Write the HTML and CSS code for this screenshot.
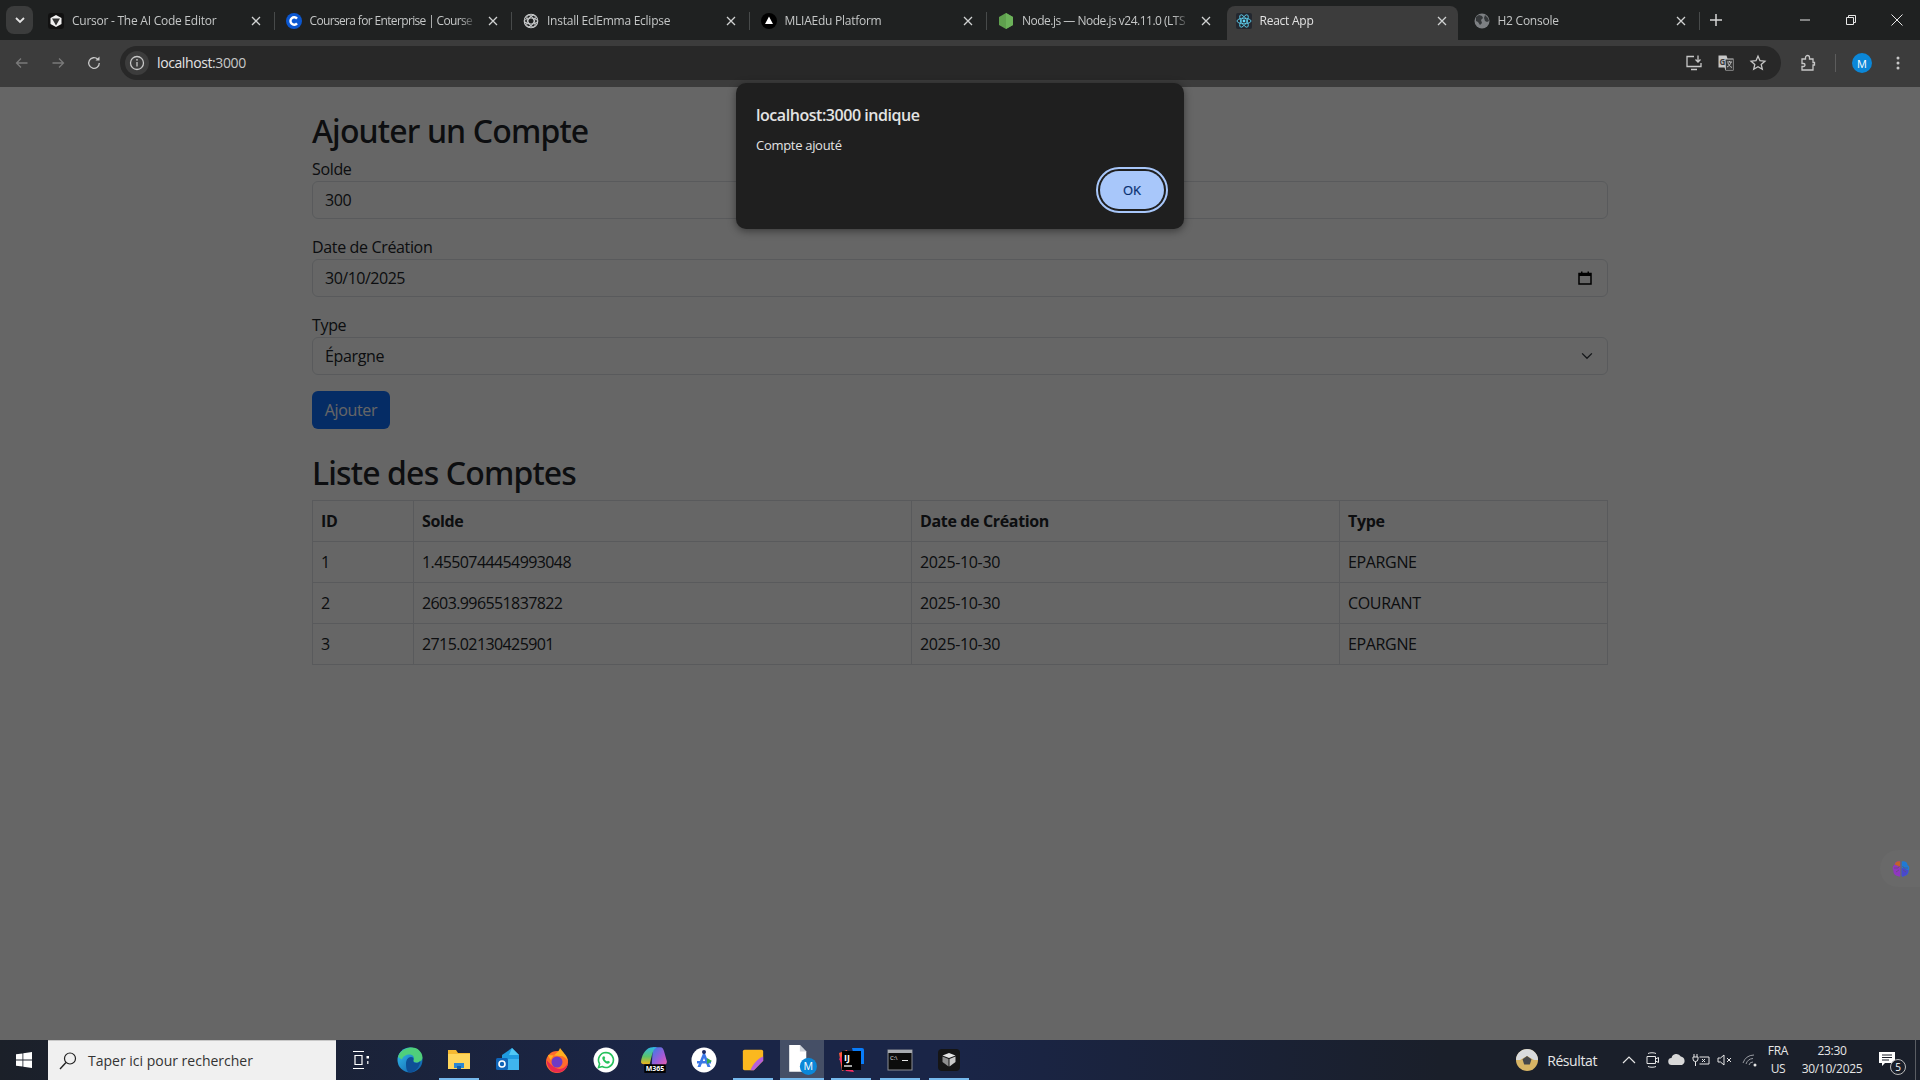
FILE: index.html
```html
<!DOCTYPE html>
<html lang="fr">
<head>
  <meta charset="utf-8">
  <title>React App</title>
  <link rel="stylesheet" href="styles.css">
</head>
<body>
  <div class="tabstrip">
    <div class="tab-search"><svg class="ico12" viewBox="0 0 12 12"><path d="M2 4l4 4 4-4" fill="none" stroke="#e3e3e3" stroke-width="1.8"/></svg></div>
    <div class="tabs">
      <div class="tab">
        <svg class="favicon" viewBox="0 0 16 16"><rect width="16" height="16" rx="3" fill="#111"/><path d="M8 2l5.5 3v6L8 14l-5.5-3V5z" fill="#f2f2f2"/><path d="M4 5.500h8L8 12.500z" fill="#333"/></svg>
        <span class="tab-title">Cursor - The AI Code Editor</span>
        <svg class="tab-close" viewBox="0 0 16 16"><path d="M4 4l8 8M12 4l-8 8"/></svg>
      </div>
      <span class="tab-sep"></span>
      <div class="tab">
        <svg class="favicon" viewBox="0 0 16 16"><circle cx="8" cy="8" r="8" fill="#0b57d0"/><path d="M11 5.600A3.700 3.700 0 1 0 11 10.400" fill="none" stroke="#fff" stroke-width="2.400"/></svg>
        <span class="tab-title tab-title-coursera">Coursera for Enterprise | Course</span>
        <svg class="tab-close" viewBox="0 0 16 16"><path d="M4 4l8 8M12 4l-8 8"/></svg>
      </div>
      <span class="tab-sep"></span>
      <div class="tab">
        <svg class="favicon" viewBox="0 0 16 16"><g fill="none" stroke="#c9cbcc" stroke-width="1.100"><circle cx="8" cy="8" r="6.800"/><ellipse cx="8" cy="8" rx="6.500" ry="3"/><ellipse cx="8" cy="8" rx="6.500" ry="3" transform="rotate(60 8 8)"/><ellipse cx="8" cy="8" rx="6.500" ry="3" transform="rotate(120 8 8)"/></g></svg>
        <span class="tab-title">Install EclEmma Eclipse</span>
        <svg class="tab-close" viewBox="0 0 16 16"><path d="M4 4l8 8M12 4l-8 8"/></svg>
      </div>
      <span class="tab-sep"></span>
      <div class="tab">
        <svg class="favicon" viewBox="0 0 16 16"><circle cx="8" cy="8" r="8" fill="#000"/><path d="M8 3.500l4 7.500H4z" fill="#fff"/></svg>
        <span class="tab-title">MLIAEdu Platform</span>
        <svg class="tab-close" viewBox="0 0 16 16"><path d="M4 4l8 8M12 4l-8 8"/></svg>
      </div>
      <span class="tab-sep"></span>
      <div class="tab">
        <svg class="favicon" viewBox="0 0 16 16"><path d="M8 0l7 4v8l-7 4-7-4V4z" fill="#5fa04e"/><path d="M8 0l7 4v8l-7 4z" fill="#6cb25a"/></svg>
        <span class="tab-title tab-title-node">Node.js — Node.js v24.11.0 (LTS</span>
        <svg class="tab-close" viewBox="0 0 16 16"><path d="M4 4l8 8M12 4l-8 8"/></svg>
      </div>
      <span class="tab-sep tab-sep-off"></span>
      <div class="tab tab-active">
        <svg class="favicon" viewBox="0 0 16 16"><rect width="16" height="16" rx="2" fill="#23272f"/><circle cx="8" cy="8" r="1.400" fill="#61dafb"/><g fill="none" stroke="#61dafb" stroke-width=".8"><ellipse cx="8" cy="8" rx="7" ry="2.800"/><ellipse cx="8" cy="8" rx="7" ry="2.800" transform="rotate(60 8 8)"/><ellipse cx="8" cy="8" rx="7" ry="2.800" transform="rotate(120 8 8)"/></g></svg>
        <span class="tab-title">React App</span>
        <svg class="tab-close" viewBox="0 0 16 16"><path d="M4 4l8 8M12 4l-8 8"/></svg>
      </div>
      <div class="tab tab-last">
        <svg class="favicon" viewBox="0 0 16 16"><circle cx="8" cy="8" r="7.500" fill="#7d8083"/><path d="M2 4l3-2 3 1 1 2-2 2 1 3-2 2-2-3-2-1zM11 2l3 3 1 3-2 1-2-1-1-3z" fill="#35383a"/></svg>
        <span class="tab-title">H2 Console</span>
        <svg class="tab-close" viewBox="0 0 16 16"><path d="M4 4l8 8M12 4l-8 8"/></svg>
      </div>
      <span class="tab-sep"></span>
    </div>
    <div class="new-tab"><svg class="ico16" viewBox="0 0 16 16"><path d="M8 2v12M2 8h12" stroke="#d5d5d5" stroke-width="1.500"/></svg></div>
    <div class="win-controls">
      <div class="win-btn"><svg class="ico12" viewBox="0 0 12 12"><path d="M1 6h10" stroke="#e6e6e6"/></svg></div>
      <div class="win-btn"><svg class="ico12" viewBox="0 0 12 12"><path d="M1.500 3.500h7v7h-7zM3.500 3.500v-2h7v7h-2" fill="none" stroke="#e6e6e6"/></svg></div>
      <div class="win-btn"><svg class="ico12" viewBox="0 0 12 12"><path d="M.5.500l11 11M11.500.500l-11 11" stroke="#e6e6e6"/></svg></div>
    </div>
  </div>

  <div class="toolbar">
    <div class="nav-btn"><svg class="ico16" viewBox="0 0 16 16"><path d="M13.500 8h-11M7 3.500L2.500 8 7 12.500" class="line-dim"/></svg></div>
    <div class="nav-btn"><svg class="ico16" viewBox="0 0 16 16"><path d="M2.500 8h11M9 3.500L13.500 8 9 12.500" class="line-dim"/></svg></div>
    <div class="nav-btn"><svg class="ico16" viewBox="0 0 16 16"><path d="M13.300 8a5.300 5.300 0 1 1-1.600-3.800" class="line"/><path d="M13.500 1.500v4h-4z" fill="#c7c7c7"/></svg></div>
    <div class="omnibox">
      <div class="info-chip"><svg class="ico16" viewBox="0 0 16 16"><circle cx="8" cy="8" r="6.500" class="line"/><path d="M8 7v4.500" class="line"/><circle cx="8" cy="4.800" r=".9" fill="#c7c7c7"/></svg></div>
      <span class="url">localhost<span class="url-port">:3000</span></span>
      <div class="omni-icons">
        <div class="omni-btn"><svg class="ico18" viewBox="0 0 18 18"><path d="M9 2.500H2v10h14V9M6 15.500h6" class="line"/><path d="M13 1.500v6.500M10.500 5.500L13 8l2.500-2.500" class="line"/></svg></div>
        <div class="omni-btn"><svg class="ico18" viewBox="0 0 18 18"><path d="M1.500 1.500h8l1 3h6v12h-8l-1-3h-6z" fill="#c7c7c7"/><path d="M8.500 5.500h7.500v10.500H9" fill="#3a3a3a"/><text x="2.500" y="10.500" class="gt-letter">G</text><path d="M10 8h5M12.500 7v1M14 8c-.5 2.500-2 4-4 5M11 9c.5 2 2 3.500 4 4.500" stroke="#c7c7c7" stroke-width=".9" fill="none"/></svg></div>
        <div class="omni-btn"><svg class="ico18" viewBox="0 0 18 18"><path d="M9 2.200l2 4.500 4.900.5-3.700 3.200 1.100 4.800L9 12.700l-4.300 2.500 1.100-4.800-3.700-3.200 4.900-.5z" class="line"/></svg></div>
      </div>
    </div>
    <div class="tool-btn tool-ext"><svg class="ico18" viewBox="0 0 18 18"><path d="M3 5h3.500V3.500a2 2 0 0 1 4 0V5H14v3.500h1.500v2.500H14v5H3v-3.500h1.500a1.500 1.500 0 0 0 0-3H3z" class="line"/></svg></div>
    <span class="tool-sep"></span>
    <div class="tool-btn tool-avatar"><span class="avatar">M</span></div>
    <div class="tool-btn tool-menu"><svg class="ico16" viewBox="0 0 16 16"><circle cx="8" cy="3" r="1.500" fill="#c7c7c7"/><circle cx="8" cy="8" r="1.500" fill="#c7c7c7"/><circle cx="8" cy="13" r="1.500" fill="#c7c7c7"/></svg></div>
  </div>

  <div class="page">
    <div class="container">
      <h2 class="title-first">Ajouter un Compte</h2>
      <div class="mb-3">
        <div class="form-label">Solde</div>
        <div class="form-control">300</div>
      </div>
      <div class="mb-3">
        <div class="form-label">Date de Création</div>
        <div class="form-control"><span class="date-value">30/10/2025</span>
          <svg class="cal-icon" viewBox="0 0 14 14"><path d="M1 2.500h12v10.500H1z" fill="none" stroke="#000" stroke-width="1.500"/><path d="M1 2h12v3H1zM3 .5h1.500V2H3zM9.500.5H11V2H9.500z"/></svg>
        </div>
      </div>
      <div class="mb-3">
        <div class="form-label">Type</div>
        <div class="form-control">Épargne
          <svg class="sel-icon" viewBox="0 0 16 16"><path d="M1.500 4.500L8 11l6.500-6.500" fill="none" stroke="#343a40" stroke-width="1.800"/></svg>
        </div>
      </div>
      <div class="btn-primary">Ajouter</div>

      <h2 class="title-second">Liste des Comptes</h2>
      <table class="table">
        <thead>
          <tr><th class="col-id">ID</th><th class="col-solde">Solde</th><th class="col-date">Date de Création</th><th>Type</th></tr>
        </thead>
        <tbody>
          <tr><td>1</td><td class="num">1.4550744454993048</td><td>2025-10-30</td><td>EPARGNE</td></tr>
          <tr><td>2</td><td class="num">2603.996551837822</td><td>2025-10-30</td><td>COURANT</td></tr>
          <tr><td>3</td><td class="num">2715.02130425901</td><td>2025-10-30</td><td>EPARGNE</td></tr>
        </tbody>
      </table>
    </div>

    <div class="scrim"></div>

    <div class="side-widget">
      <svg class="brain" viewBox="0 0 20 20">
        <path d="M9.300 2.500C6 1.500 3.500 3.500 3.500 6 1.500 7 1 10 2.500 11.500 2 14.500 4.500 17 7 17c1 1 2.300.8 2.300-.5z" fill="#8f37c0"/>
        <path d="M9 2.500C6.500 1.800 4.500 3 3.800 5.500L9 8z" fill="#c2622a"/>
        <path d="M10.700 2.500C14 1.500 16.500 3.500 16.500 6c2 1 2.500 4 1 5.500.5 3-2 5.500-4.500 5.500-1 1-2.300.8-2.300-.5z" fill="#1f7ad6"/>
        <path d="M10.700 9c2 0 4 1 6.800 2.500-.5 3-2 5.500-4.500 5.500-1 1-2.300.8-2.300-.5z" fill="#4a48cc"/>
        <path d="M3 9h4l1.500-2M5 13l3-2M17 9h-4l-1.500-2M15 13l-3-2" fill="none" stroke="#5c5570" stroke-width=".7"/>
      </svg>
    </div>
  </div>

  <div class="dialog">
    <div class="dialog-title">localhost:3000 indique</div>
    <div class="dialog-msg">Compte ajouté</div>
    <div class="dialog-actions"><div class="dialog-ok">OK</div></div>
  </div>

  <div class="taskbar">
    <div class="start"><svg class="ico16" viewBox="0 0 16 16"><path d="M0 2.300L6.500 1.400v6.200H0zM7.300 1.300L16 0v7.600H7.300zM0 8.400h6.500v6.200L0 13.700zM7.300 8.400H16V16L7.300 14.700z" fill="#fff"/></svg></div>
    <div class="search-box">
      <svg class="ico20" viewBox="0 0 20 20"><circle cx="12" cy="7.500" r="5.500" fill="none" stroke="#222" stroke-width="1.200"/><path d="M8 11.500L2 18" stroke="#222" stroke-width="1.400"/></svg>
      <span class="search-text">Taper ici pour rechercher</span>
    </div>

    <div class="task-slot"><svg class="ico20" viewBox="0 0 20 20"><path d="M2 1.500h11M2 18.500h11M4 5.500h7v9H4z" fill="none" stroke="#fff" stroke-width="1.200"/><path d="M15.500 6h2.500v2.500h-2.500z" fill="#fff"/><path d="M16.800 11v3" stroke="#fff" stroke-width="1.200"/></svg></div>
    <div class="task-slot"><svg class="ico26" viewBox="0 0 26 26">
      <defs><linearGradient id="edgeA" x1="0" y1="0" x2="1" y2="1"><stop offset="0" stop-color="#35c1f1"/><stop offset="1" stop-color="#0b57a4"/></linearGradient></defs>
      <circle cx="13" cy="13" r="12.500" fill="url(#edgeA)"/>
      <path d="M1 10C3 3 10 .5 15 .5c6 0 10.500 5 10.500 10 0 3-3 5-6 5-2 0-3.500-1-3.500-2 2-2 .5-6-3-6-4 0-7.500 2-8 5z" fill="#4fcf7b"/>
      <path d="M9 17c0-4 2-7 5-7 2 0 3 1 2.500 3-1 4 5 4 7 .5C23 20 18 25.500 13 25.500c-3 0-4-4-4-8.500z" fill="#0e4f96"/>
    </svg></div>
    <div class="task-slot task-open"><svg class="ico26" viewBox="0 0 26 26"><path d="M2 3h8l2 3h12v3H2z" fill="#f5b932"/><path d="M2 7h22v15H2z" fill="#ffd65c"/><path d="M8 21v-5h10v5z" fill="#2b87d3"/><path d="M11 22v-3h4v3z" fill="#125ea8"/></svg></div>
    <div class="task-slot"><svg class="ico26" viewBox="0 0 26 26"><path d="M7 8L17 1l7 7v15H7z" fill="#1f9be0"/><path d="M17 1l7 7H14z" fill="#50c8f5"/><path d="M12 12h12v11H12z" fill="#3fb4ee"/><rect x="1" y="11" width="12" height="12" rx="1.500" fill="#0f64b8"/><circle cx="7" cy="17" r="3" fill="none" stroke="#fff" stroke-width="1.600"/></svg></div>
    <div class="task-slot"><svg class="ico26" viewBox="0 0 26 26">
      <circle cx="13" cy="15" r="11" fill="#ff6b2c"/>
      <path d="M4 8c1 3 2 4 3 5 2-6 7-6 9-12 3 4 7 8 8 13-2-3-4-5-8-5z" fill="#ffb01f"/>
      <path d="M2.500 13C3 21 8 25.500 13 25.500S23 23 24 16c-3 6-8 7-12 5-3-1.500-6-4-9.500-8z" fill="#e8294f"/>
      <circle cx="13" cy="15" r="5.500" fill="#6e3ac4"/>
    </svg></div>
    <div class="task-slot"><svg class="ico26" viewBox="0 0 26 26"><circle cx="13" cy="13" r="12.500" fill="#fff"/><path d="M13 5.500a7.500 7.500 0 0 0-6.400 11.400L5.500 20.500l3.700-1A7.500 7.500 0 1 0 13 5.500z" fill="none" stroke="#25c15b" stroke-width="1.600"/><path d="M10 9.500c-1 1-1 2.500.5 4.500s3.500 3 5 2.500c1-.3 1.500-1 1.300-1.800l-1.800-1-1 .8c-1-.5-2-1.500-2.500-2.500l.8-1-1-1.800z" fill="#25c15b"/></svg></div>
    <div class="task-slot"><svg class="ico-m365" viewBox="0 0 28 28">
      <defs><linearGradient id="m365A" x1="0" y1="0" x2="0" y2="1"><stop offset="0" stop-color="#2fb8e6"/><stop offset=".55" stop-color="#5cc36a"/><stop offset="1" stop-color="#f3b41b"/></linearGradient><linearGradient id="m365B" x1="0" y1="0" x2="1" y2="1"><stop offset="0" stop-color="#2f7fe6"/><stop offset=".6" stop-color="#a45ad8"/><stop offset="1" stop-color="#ec5fa8"/></linearGradient></defs>
      <path d="M12 2h7c2 0 3 2 3.500 4L25 15c.5 2-1 4-3 4H11z" fill="url(#m365B)"/>
      <path d="M1 15C2 8 6 2 12 2h4c-3 1-4 4-5 8l-2 8H4c-2 0-3.500-1-3-3z" fill="url(#m365A)"/>
      <rect x="4" y="18" width="20" height="8" fill="#000"/><text x="14" y="24.500" class="m365-label">M365</text>
    </svg></div>
    <div class="task-slot"><svg class="ico26" viewBox="0 0 26 26"><circle cx="13" cy="13" r="12.500" fill="#fff"/><path d="M13 4l-6.500 16h3l3.500-9 3.500 9h3z" fill="#3b78e7"/><path d="M6 14h14v2.500H6z" fill="#3b78e7"/><path d="M16 11l5 3-5 3z" fill="#34a853"/><circle cx="13" cy="5" r="2" fill="#1a2a66"/></svg></div>
    <div class="task-slot task-open"><svg class="ico22" viewBox="0 0 26 26"><path d="M3 1h20a2 2 0 0 1 2 2v11L14 25H3a2 2 0 0 1-2-2V3a2 2 0 0 1 2-2z" fill="#fbb81f"/><path d="M25 9v5L14 25h-4c3-7 8-13 15-16z" fill="#b45fdc"/></svg></div>
    <div class="task-slot task-open task-active"><svg class="ico-doc" viewBox="0 0 30 30"><path d="M3 1h10l6 6v19H3z" fill="#fff"/><path d="M13 1l6 6h-6z" fill="#cfd3da"/><circle cx="21" cy="21" r="8" fill="#0b87d8"/><text x="21" y="24.500" class="doc-letter">M</text></svg></div>
    <div class="task-slot task-open"><svg class="ico26" viewBox="0 0 26 26"><path d="M1 6l8-3 3 18-8 3z" fill="#fc5b3c"/><path d="M1 12l7 12 8 1-10-18z" fill="#fb2e63"/><path d="M14 1h10a2 2 0 0 1 2 2v14h-8z" fill="#087cfa"/><rect x="4" y="4" width="19" height="19" fill="#000"/><text x="6" y="14" class="ij-label">IJ</text><path d="M6 19h8" stroke="#fff" stroke-width="1.300"/></svg></div>
    <div class="task-slot task-open"><svg class="ico26" viewBox="0 0 26 26"><rect x="1" y="3" width="24" height="20" fill="#0c0c0c" stroke="#8c8f95"/><path d="M1 3h24v3H1z" fill="#a8abb0"/><text x="3" y="13" class="cmd-label">C:\</text><path d="M15 13.500h6" stroke="#e6e6e6"/></svg></div>
    <div class="task-slot task-open"><svg class="ico22" viewBox="0 0 22 22"><rect width="22" height="22" rx="4" fill="#151515"/><path d="M4.500 6.500L11 4l6.500 2.500L11 9z" fill="#e6e6e6"/><path d="M4.500 7.500L10.500 10v7.500L4.500 13z" fill="#8e8e8e"/><path d="M17.500 7.500L11.500 10v7.500L17.500 13z" fill="#c8c8c8"/></svg></div>

    <div class="tray">
      <div class="weather">
        <svg class="ico22" viewBox="0 0 22 22"><circle cx="11" cy="11" r="11" fill="#d8b565"/><path d="M0 11a11 11 0 0 1 22 0h-4l-7-4-7 4z" fill="#d9dbde"/><path d="M11 7l4.500 3.300-1.700 5.200H8.200l-1.700-5.200z" fill="#45474b"/></svg>
        <span class="weather-text">Résultat</span>
      </div>
      <div class="tray-icon"><svg class="ico14" viewBox="0 0 14 14"><path d="M1 10l6-6 6 6" fill="none" stroke="#e6e6e6" stroke-width="1.200"/></svg></div>
      <div class="tray-icon"><svg class="ico16" viewBox="0 0 16 16"><path d="M3 1.500c2-1 6-1 8 0M3 14.500c2 1 6 1 8 0M2 4.500h8.500v7H2zM10.500 7l3-1.500v5l-3-1.500" fill="none" stroke="#e6e6e6"/></svg></div>
      <div class="tray-icon"><svg class="ico18" viewBox="0 0 18 18"><path d="M4 14a3.500 3.500 0 0 1-.5-7 5 5 0 0 1 9.300-1.500A4.500 4.500 0 0 1 14 14z" fill="#d8d8d8"/></svg></div>
      <div class="tray-icon"><svg class="ico18" viewBox="0 0 18 18"><path d="M2 3v3M5 3v3M1 6h5v2a2.500 2.500 0 0 1-5 0zM3.500 10.500V15M7.500 6H17v7H7.500" fill="none" stroke="#e6e6e6"/><path d="M10 8l3 3M13 8l-3 3" stroke="#e6e6e6"/></svg></div>
      <div class="tray-icon"><svg class="ico16" viewBox="0 0 16 16"><path d="M1 6v4h2.500L7 13V3L3.500 6z" fill="none" stroke="#e6e6e6"/><path d="M10 6l4 4M14 6l-4 4" stroke="#e6e6e6"/></svg></div>
      <div class="tray-icon tray-wifi"><svg class="ico16" viewBox="0 0 16 16"><path d="M1 11a12 12 0 0 1 11-8M4 12a8 8 0 0 1 7-5.500M7 13a4 4 0 0 1 4-3" fill="none" stroke="#9a9da3"/><circle cx="13" cy="13" r="1.500" fill="#e6e6e6"/></svg></div>
      <div class="lang"><span>FRA</span><span>US</span></div>
      <div class="clock"><span>23:30</span><span>30/10/2025</span></div>
      <div class="notif">
        <svg class="ico18" viewBox="0 0 18 18"><path d="M1 1h16v11H7l-3 3v-3H1z" fill="#fff"/><path d="M4 4h10M4 6.500h10M4 9h7" stroke="#1a1e28"/></svg>
        <span class="notif-badge">5</span>
      </div>
      <span class="show-desktop"></span>
    </div>
  </div>
</body>
</html>
```

FILE: styles.css
```css
* {
  box-sizing: border-box;
}

html,
body {
  margin: 0;
  height: 100%;
}

body {
  position: relative;
  width: 1920px;
  height: 1080px;
  overflow: hidden;
  display: flex;
  flex-direction: column;
  font-family: "Open Sans", "Noto Sans", sans-serif;
  background-color: #fff;
}

svg {
  display: block;
  flex: none;
}

.ico12 { width: 12px; height: 12px; }
.ico14 { width: 14px; height: 14px; }
.ico16 { width: 16px; height: 16px; }
.ico18 { width: 18px; height: 18px; }
.ico20 { width: 20px; height: 20px; }
.ico22 { width: 22px; height: 22px; }
.ico26 { width: 26px; height: 26px; }
.ico-m365 { width: 30px; height: 30px; }
.ico-doc { width: 32px; height: 32px; }

.line,
.line-dim {
  fill: none;
  stroke: #c7c7c7;
  stroke-width: 1.3;
}

.line-dim {
  stroke: #7a7a7a;
}

/* tab strip */
.tabstrip {
  height: 40px;
  flex: none;
  display: flex;
  background-color: #1f2121;
}

.tab-search {
  width: 27px;
  height: 28px;
  margin: 6px 4px 0 6px;
  border-radius: 8px;
  background-color: #3b3c3c;
  display: flex;
  align-items: center;
  justify-content: center;
}

.tabs {
  display: flex;
  align-items: flex-end;
}

.tab {
  width: 236.5px;
  height: 34px;
  padding: 0 10px 5px 11px;
  display: flex;
  align-items: center;
  gap: 8px;
  font-size: 12px;
  letter-spacing: -0.25px;
  color: #c5c7c7;
}

.tab-active {
  width: 231px;
  margin: 0 4.5px 0 2.5px;
  padding: 0 8px 5px 8.5px;
  border-radius: 8px 8px 0 0;
  background-color: #3c3c3c;
  color: #e3e3e3;
}

.favicon {
  width: 16px;
  height: 16px;
}

.tab-title {
  flex: 1;
  min-width: 0;
  overflow: hidden;
  white-space: nowrap;
  -webkit-mask-image: linear-gradient(to right, #000 90%, transparent 100%);
  mask-image: linear-gradient(to right, #000 90%, transparent 100%);
}

.tab-title-coursera {
  letter-spacing: -0.65px;
}

.tab-title-node {
  letter-spacing: -0.5px;
}

.tab-close {
  width: 16px;
  height: 16px;
  fill: none;
  stroke: #d0d2d2;
  stroke-width: 1.3;
}

.tab-sep {
  width: 1px;
  height: 18px;
  margin-bottom: 10px;
  background-color: #474a4a;
}

.tab-sep-off {
  background-color: transparent;
}

.new-tab {
  width: 32px;
  display: flex;
  align-items: center;
  justify-content: center;
}

.win-controls {
  margin-left: auto;
  display: flex;
}

.win-btn {
  width: 46px;
  display: flex;
  align-items: center;
  justify-content: center;
}

/* toolbar */
.toolbar {
  height: 47px;
  flex: none;
  padding: 6px 0 0 4px;
  display: flex;
  align-items: flex-start;
  background-color: #3c3c3c;
}

.nav-btn {
  width: 36px;
  height: 34px;
  display: flex;
  align-items: center;
  justify-content: center;
}

.omnibox {
  width: 1661px;
  height: 34px;
  margin-left: 8px;
  padding: 0 7px 0 5px;
  border-radius: 17px;
  background-color: #282828;
  display: flex;
  align-items: center;
}

.info-chip {
  width: 24px;
  height: 24px;
  border-radius: 12px;
  background-color: #3c3c3c;
  display: flex;
  align-items: center;
  justify-content: center;
}

.url {
  margin-left: 8px;
  font-size: 14px;
  letter-spacing: -0.4px;
  line-height: 18px;
  padding-bottom: 1px;
  color: #e3e3e3;
}

.url-port {
  color: #c7c7c7;
}

.omni-icons {
  margin-left: auto;
  display: flex;
}

.omni-btn {
  width: 32px;
  height: 32px;
  display: flex;
  align-items: center;
  justify-content: center;
}

.gt-letter {
  font-size: 8px;
  font-weight: 700;
  fill: #3a3a3a;
}

.tool-btn {
  width: 32px;
  height: 34px;
  display: flex;
  align-items: center;
  justify-content: center;
}

.tool-ext {
  margin-left: 11px;
}

.tool-sep {
  width: 1px;
  height: 18px;
  margin: 8px 0 0 11px;
  background-color: #5c5c5c;
}

.tool-avatar {
  margin-left: 10px;
}

.tool-menu {
  margin-left: 4px;
}

.avatar {
  width: 20px;
  height: 20px;
  border-radius: 50%;
  background-color: #0b87d8;
  color: #fff;
  font-size: 11px;
  display: flex;
  align-items: center;
  justify-content: center;
}

/* page */
.page {
  position: relative;
  flex: 1;
  min-height: 0;
  background-color: #fff;
  color: #212529;
}

.container {
  width: 1320px;
  margin: 0 auto;
  padding: 0 12px;
  font-size: 16px;
  line-height: 24px;
  letter-spacing: -0.35px;
}

h2 {
  margin: 25px 0 7px;
  font-family: "Noto Sans", "Open Sans", sans-serif;
  font-size: 32px;
  font-weight: 500;
  line-height: 38.4px;
  letter-spacing: -0.85px;
}

.mb-3 {
  margin-bottom: 16px;
}

.form-control {
  height: 38px;
  padding: 6px 12px;
  border: 1px solid #dee2e6;
  border-radius: 6px;
  display: flex;
  align-items: center;
  justify-content: space-between;
}

.date-value {
  letter-spacing: -0.5px;
}

.num {
  letter-spacing: -0.6px;
}

.cal-icon {
  width: 14px;
  height: 14px;
  margin-right: 3px;
}

.sel-icon {
  width: 12px;
  height: 12px;
  margin-right: 2px;
}

.btn-primary {
  width: 78px;
  height: 38px;
  border-radius: 6px;
  background-color: #0d6efd;
  color: #fff;
  display: flex;
  align-items: center;
  justify-content: center;
}

.table {
  width: 100%;
  table-layout: fixed;
  border-collapse: collapse;
}

.table th,
.table td {
  padding: 8px;
  border: 1px solid #dee2e6;
  text-align: left;
}

.table th {
  font-weight: 700;
}

.col-id { width: 101px; }
.col-solde { width: 498px; }
.col-date { width: 428px; }

.side-widget {
  position: absolute;
  right: 0;
  top: 763px;
  width: 40px;
  height: 37px;
  padding-left: 11px;
  border-radius: 18px 0 0 18px;
  background-color: rgba(255, 255, 255, 0.02);
  display: flex;
  align-items: center;
}

.brain {
  width: 20px;
  height: 20px;
}

.scrim {
  position: absolute;
  inset: 0;
  background-color: rgba(0, 0, 0, 0.6);
}

/* alert */
.dialog {
  position: absolute;
  left: 736px;
  top: 83px;
  width: 448px;
  height: 146px;
  padding: 20px 16px 0 20px;
  border-radius: 10px;
  background-color: #1f1f1f;
  color: #e3e3e3;
  box-shadow: 0 2px 8px rgba(0, 0, 0, 0.45);
}

.dialog-title {
  font-size: 16px;
  font-weight: 600;
  line-height: 24px;
  letter-spacing: -0.45px;
}

.dialog-msg {
  margin-top: 8px;
  font-size: 13px;
  line-height: 20px;
  letter-spacing: -0.3px;
}

.dialog-actions {
  margin-top: 16px;
  display: flex;
  justify-content: flex-end;
}

.dialog-ok {
  width: 64px;
  height: 38px;
  margin-right: 4px;
  border-radius: 19px;
  background-color: #a8c7fa;
  color: #062e6f;
  font-size: 13px;
  -webkit-text-stroke: 0.2px #062e6f;
  outline: 2px solid #a8c7fa;
  outline-offset: 2px;
  display: flex;
  align-items: center;
  justify-content: center;
}

/* taskbar */
.taskbar {
  height: 40px;
  flex: none;
  display: flex;
  color: #fff;
  background: linear-gradient(to right, #1b2029 0%, #1a2547 35%, #1a2547 50%, #1a1f2a 75%, #1a1f2a 100%);
}

.start {
  width: 48px;
  display: flex;
  align-items: center;
  justify-content: center;
}

.search-box {
  width: 288px;
  padding: 0 0 0 10px;
  display: flex;
  align-items: center;
  gap: 10px;
  background-color: #f0f0f0;
  border-top: 1px solid #c8c8c8;
  color: #333;
  font-size: 14px;
}

.task-slot {
  width: 49px;
  display: flex;
  align-items: center;
  justify-content: center;
}

.task-open {
  background: linear-gradient(#76b9ed, #76b9ed) bottom center / 40px 2px no-repeat;
}

.task-active {
  background:
    linear-gradient(#76b9ed, #76b9ed) bottom center / 44px 2px no-repeat,
    linear-gradient(#454f66, #454f66) center / 44px 40px no-repeat;
}

.m365-label {
  font-size: 6.500px;
  font-weight: 700;
  fill: #fff;
  text-anchor: middle;
}

.doc-letter {
  font-size: 10px;
  fill: #fff;
  text-anchor: middle;
}

.ij-label {
  font-size: 9px;
  font-weight: 700;
  fill: #fff;
}

.cmd-label {
  font-size: 6px;
  fill: #e6e6e6;
}

.tray {
  margin-left: auto;
  display: flex;
  align-items: center;
}

.weather {
  display: flex;
  align-items: center;
  gap: 9px;
  margin-right: 20px;
  font-size: 14px;
  letter-spacing: -0.4px;
  color: #e6e6e6;
}

.tray-icon {
  width: 24px;
  display: flex;
  align-items: center;
  justify-content: center;
}

.tray-wifi {
  margin-left: 1px;
}

.lang,
.clock {
  display: flex;
  flex-direction: column;
  align-items: center;
  font-size: 12px;
  line-height: 18px;
  letter-spacing: -0.3px;
  color: #e6e6e6;
}

.lang {
  width: 32px;
}

.clock {
  width: 70px;
  margin-left: 3px;
}

.notif {
  position: relative;
  width: 40px;
  display: flex;
  justify-content: center;
}

.notif-badge {
  position: absolute;
  right: 1px;
  top: 8px;
  width: 16px;
  height: 16px;
  border: 1px solid #bbb;
  border-radius: 50%;
  background-color: #1a1f2a;
  font-size: 10px;
  line-height: 14px;
  text-align: center;
}

.show-desktop {
  width: 1px;
  height: 40px;
  margin-left: 8px;
  margin-right: 4px;
  background-color: #5a5d63;
}
```
